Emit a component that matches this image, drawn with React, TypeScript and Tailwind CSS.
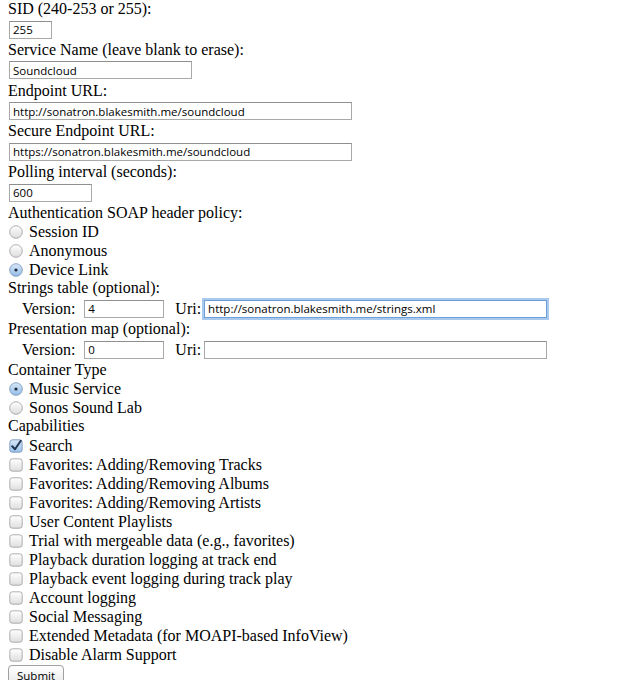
import React from "react";

const inputFont = "[font-family:'Open_Sans','DejaVu_Sans',sans-serif]";

function Field({ value, w, focused }: { value?: string; w: string; focused?: boolean }) {
    return (
        <input
            readOnly
            defaultValue={value}
            className={`${w} h-[18px] px-[3px] text-[11.5px] text-black bg-white outline-none ${inputFont} ${
                focused
                    ? "border border-[#6f9fd9] shadow-[0_0_0_2px_#a9c9ee]"
                    : "border border-[#a9a9a9] border-t-[#8f8f8f]"
            }`}
        />
    );
}

function Radio({ checked }: { checked?: boolean }) {
    return (
        <svg width="14" height="14" viewBox="0 0 14 14" className="shrink-0 mt-[3px]">
            <defs>
                <linearGradient id="rOff" x1="0" y1="0" x2="0" y2="1">
                    <stop offset="0" stopColor="#ffffff" />
                    <stop offset="1" stopColor="#dcdcdc" />
                </linearGradient>
                <linearGradient id="rOn" x1="0" y1="0" x2="0" y2="1">
                    <stop offset="0" stopColor="#d8e8f8" />
                    <stop offset="1" stopColor="#94bde9" />
                </linearGradient>
            </defs>
            <circle cx="7" cy="7" r="6.3" fill={checked ? "url(#rOn)" : "url(#rOff)"} stroke={checked ? "#6e8fb6" : "#9c9c9c"} strokeWidth="0.8" />
            {checked && <circle cx="7" cy="7" r="1.6" fill="#1e2a3a" />}
        </svg>
    );
}

function Check({ checked }: { checked?: boolean }) {
    return (
        <svg width="14" height="14" viewBox="0 0 14 14" className="shrink-0 mt-[3px]">
            <defs>
                <linearGradient id="cOff" x1="0" y1="0" x2="0" y2="1">
                    <stop offset="0" stopColor="#ffffff" />
                    <stop offset="1" stopColor="#dedede" />
                </linearGradient>
                <linearGradient id="cOn" x1="0" y1="0" x2="0" y2="1">
                    <stop offset="0" stopColor="#d8e8f8" />
                    <stop offset="1" stopColor="#9cc2ea" />
                </linearGradient>
            </defs>
            <rect x="0.8" y="0.8" width="12.4" height="12.4" rx="2.5" fill={checked ? "url(#cOn)" : "url(#cOff)"} stroke={checked ? "#6e8fb6" : "#9c9c9c"} strokeWidth="0.8" />
            {checked && <path d="M3.2 7.2 L6 10.2 L11.8 1.8" fill="none" stroke="#1f3550" strokeWidth="2" strokeLinecap="round" strokeLinejoin="round" />}
        </svg>
    );
}

function Label({ children }: { children: React.ReactNode }) {
    return <div className="h-[18.5px] leading-[18.5px]">{children}</div>;
}

function Row({ children }: { children: React.ReactNode }) {
    return <div className="h-[22.25px] flex items-center pl-[1px]">{children}</div>;
}

function Option({ children, checked, box }: { children: React.ReactNode; checked?: boolean; box?: boolean }) {
    return (
        <div className="h-[19px] flex items-start gap-[6px] pl-[1px]">
            {box ? <Check checked={checked} /> : <Radio checked={checked} />}
            <span>{children}</span>
        </div>
    );
}

const capabilities = [
    "Favorites: Adding/Removing Tracks",
    "Favorites: Adding/Removing Albums",
    "Favorites: Adding/Removing Artists",
    "User Content Playlists",
    "Trial with mergeable data (e.g., favorites)",
    "Playback duration logging at track end",
    "Playback event logging during track play",
    "Account logging",
    "Social Messaging",
    "Extended Metadata (for MOAPI-based InfoView)",
    "Disable Alarm Support",
];

export default function App() {
    return (
        <form className="px-2 bg-white text-black text-[16px] leading-[19px] [font-family:'Liberation_Serif',serif] min-h-[680px]">
            <Label>SID (240-253 or 255):</Label>
            <Row><Field value="255" w="w-[43px]" /></Row>
            <Label>Service Name (leave blank to erase):</Label>
            <Row><Field value="Soundcloud" w="w-[183px]" /></Row>
            <Label>Endpoint URL:</Label>
            <Row><Field value="http://sonatron.blakesmith.me/soundcloud" w="w-[343px]" /></Row>
            <Label>Secure Endpoint URL:</Label>
            <Row><Field value="https://sonatron.blakesmith.me/soundcloud" w="w-[343px]" /></Row>
            <Label>Polling interval (seconds):</Label>
            <Row><Field value="600" w="w-[83px]" /></Row>
            <Label>Authentication SOAP header policy:</Label>
            <Option>Session ID</Option>
            <Option>Anonymous</Option>
            <Option checked>Device Link</Option>
            <Label>Strings table (optional):</Label>
            <Row>
                <span className="ml-[13px] mr-[9px]">Version:</span>
                <Field value="4" w="w-[80px]" />
                <span className="ml-[11px] mr-[3px]">Uri:</span>
                <Field value="http://sonatron.blakesmith.me/strings.xml" w="w-[343px]" focused />
            </Row>
            <Label>Presentation map (optional):</Label>
            <Row>
                <span className="ml-[13px] mr-[9px]">Version:</span>
                <Field value="0" w="w-[80px]" />
                <span className="ml-[11px] mr-[3px]">Uri:</span>
                <Field w="w-[343px]" />
            </Row>
            <Label>Container Type</Label>
            <Option checked>Music Service</Option>
            <Option>Sonos Sound Lab</Option>
            <Label>Capabilities</Label>
            <Option box checked>Search</Option>
            {capabilities.map((c) => (
                <Option box key={c}>{c}</Option>
            ))}
            <div className="pt-[1px]">
                <button
                    type="button"
                    className={`h-[22px] px-[8px] rounded-[4px] border border-[#9f9f9f] bg-gradient-to-b from-white to-[#e6e6e6] text-[11.5px] leading-[20px] ${inputFont}`}
                >
                    Submit
                </button>
            </div>
        </form>
    );
}
